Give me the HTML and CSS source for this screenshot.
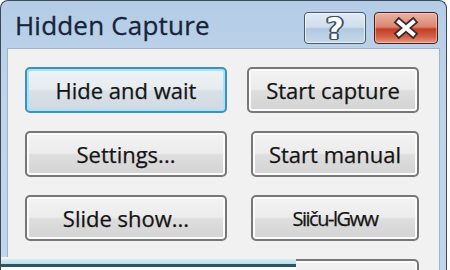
FILE: index.html
```html
<!DOCTYPE html>
<html>
<head>
<meta charset="utf-8">
<link rel="stylesheet" href="styles.css">
</head>
<body>
<div class="window">
  <div class="titlebar">
    <span class="title">Hidden Capture</span>
    <div class="controls">
      <div class="cbtn help"><span class="q">?</span></div>
      <div class="cbtn close">
        <svg width="26" height="22" viewBox="0 0 26 22">
          <path d="M6 5 L20 17 M20 5 L6 17" stroke="#3a2a28" stroke-width="7.5" stroke-linecap="square" fill="none"/>
          <path d="M6 5 L20 17 M20 5 L6 17" stroke="#ffffff" stroke-width="4" stroke-linecap="square" fill="none"/>
        </svg>
      </div>
    </div>
  </div>
  <div class="client">
    <div class="grid">
      <div class="btn default">Hide and wait</div>
      <div class="btn right wide">Start capture</div>
      <div class="btn">Settings...</div>
      <div class="btn right">Start manual</div>
      <div class="btn">Slide show...</div>
      <div class="btn right garbled">Siiču-lGww</div>
      <div class="spacer"></div>
      <div class="btn right"></div>
    </div>
  </div>
  <div class="bottom-edge"></div>
</div>
</body>
</html>
```
FILE: styles.css
```css
html, body {
  margin: 0;
  padding: 0;
  width: 450px;
  height: 270px;
  overflow: hidden;
  background: #ffffff;
  font-family: "Open Sans", "DejaVu Sans", sans-serif;
}

.window {
  position: relative;
  box-sizing: border-box;
  width: 447px;
  height: 270px;
  overflow: hidden;
  border: 1px solid #3c4a58;
  border-bottom: none;
  border-radius: 8px 8px 0 0;
  background: linear-gradient(#b4cce6, #bfd4ea 30%, #c2d6eb);
  padding: 0 6px;
  display: flex;
  flex-direction: column;
}

.titlebar {
  height: 47px;
  flex: none;
  display: flex;
  align-items: flex-start;
  padding-left: 8px;
}

.title {
  font-size: 26px;
  line-height: 26px;
  margin-top: 11px;
  color: #16243a;
  letter-spacing: 0.2px;
  -webkit-text-stroke: 0.3px #16243a;
}

.controls {
  margin-left: auto;
  margin-right: 2px;
  margin-top: 11px;
  display: flex;
  gap: 8px;
}

.cbtn {
  box-sizing: border-box;
  height: 32px;
  border-radius: 4px;
  display: flex;
  align-items: center;
  justify-content: center;
}

.help {
  width: 62px;
  border: 1.5px solid #4a5a6c;
  background: linear-gradient(#e2ebf6, #cddced 48%, #b2c7df 52%, #c6d8eb);
  box-shadow: inset 0 0 0 1px rgba(255,255,255,0.6);
}

.q {
  font-family: "DejaVu Sans", sans-serif;
  font-weight: bold;
  font-size: 30px;
  line-height: 30px;
  margin-top: 2px;
  color: #ffffff;
  text-shadow: 1px 0 0 #3b4d63, -1px 0 0 #3b4d63, 0 1px 0 #3b4d63, 0 -1px 0 #3b4d63,
               1px 1px 0 #3b4d63, -1px -1px 0 #3b4d63, 1px -1px 0 #3b4d63, -1px 1px 0 #3b4d63,
               2px 0 0 #3b4d63, -2px 0 0 #3b4d63;
}

.close {
  width: 64px;
  border: 1.5px solid #4a1f1a;
  background: linear-gradient(#e9b4a5, #da8670 46%, #c43c26 54%, #d2634a 80%, #e49a83);
  box-shadow: inset 0 0 0 1px rgba(255,220,210,0.5);
}

.client {
  flex: 1;
  background: #f1f1f1;
  border: 1px solid #9fb3c9;
  border-bottom: none;
  padding: 18px 0 0 17px;
}

.grid {
  display: grid;
  grid-template-columns: 202px 170px;
  grid-auto-rows: 46px;
  column-gap: 22px;
  row-gap: 18px;
}

.btn {
  box-sizing: border-box;
  border: 2px solid #777777;
  border-radius: 5px;
  box-shadow: inset 0 0 0 2px #fbfbfb;
  background: linear-gradient(#f3f3f3, #ececec 48%, #dedede 52%, #d3d3d3);
  display: flex;
  align-items: center;
  justify-content: center;
  font-size: 22px;
  color: #141414;
  -webkit-text-stroke: 0.25px #141414;
  white-space: nowrap;
}

.btn.right {
  width: 168px;
  margin-left: 2px;
}

.btn.wide {
  width: 172px;
  margin-left: -2px;
}

.btn.default {
  border-color: #3f8fbf;
  box-shadow: inset 0 0 0 2px #a8e4f8;
  background: linear-gradient(#eef3f6, #e6ecf0 48%, #d9e1e8 52%, #d0d9e1);
}

.btn.garbled {
  font-size: 20px;
  letter-spacing: -1.5px;
}

.bottom-edge {
  position: absolute;
  left: -1px;
  top: 256px;
  width: 296px;
  height: 14px;
  background: linear-gradient(#f1f1f1 0, #f1f1f1 2px, #d6edf4 2px, #b9dde9 7px, #2d5661 7px, #2d5661 10px, #ffffff 10px);
}
```
